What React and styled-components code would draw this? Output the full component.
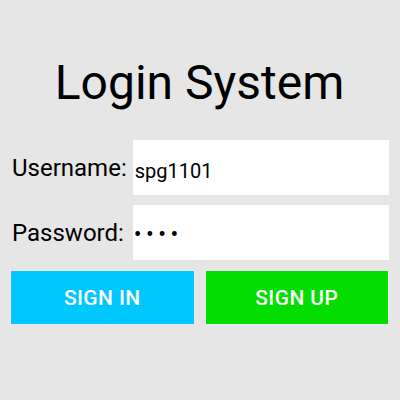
import React from "react";
import styled, { createGlobalStyle } from "styled-components";

const Global = createGlobalStyle`
  html, body {
    margin: 0;
    padding: 0;
    background: #e6e6e6;
  }
  body {
    font-family: Roboto, "Noto Sans", "Liberation Sans", sans-serif;
    color: #000;
  }
`;

const Page = styled.div`
  width: 400px;
  height: 400px;
  box-sizing: border-box;
  padding: 59px 11px 0 10px;
  display: flex;
  flex-direction: column;
  background: #e6e6e6;
`;

const Title = styled.h1`
  margin: 0 0 33px 0;
  font-family: Roboto, sans-serif;
  font-weight: 400;
  font-size: 48px;
  line-height: 48px;
  text-align: center;
  color: #000;
`;

const Form = styled.div`
  display: grid;
  grid-template-columns: auto 1fr;
  column-gap: 6px;
  row-gap: 10px;
  padding-left: 2px;
`;

const Label = styled.label`
  display: flex;
  align-items: center;
  font-family: Roboto, sans-serif;
  font-size: 24px;
  line-height: 28px;
  color: #000;
`;

const Field = styled.input`
  box-sizing: border-box;
  height: 55px;
  width: 100%;
  border: none;
  outline: none;
  background: #fff;
  margin: 0;
  padding: ${(p) => (p.type === "password" ? "4px 0 0 1px" : "6px 0 0 2px")};
  font-family: Roboto, sans-serif;
  font-size: ${(p) => (p.type === "password" ? "23px" : "20px")};
  color: #000;
  letter-spacing: ${(p) => (p.type === "password" ? "4.5px" : "0")};
`;

const Buttons = styled.div`
  display: grid;
  grid-template-columns: 1fr 1fr;
  column-gap: 10px;
  margin-top: 10px;
`;

const Button = styled.button`
  box-sizing: border-box;
  height: 55px;
  border: 1px solid #f0e8f0;
  border-radius: 0;
  background: ${(p) => p.$bg};
  color: #fff;
  font-family: Roboto, sans-serif;
  font-weight: 500;
  font-size: 21px;
  letter-spacing: 0.4px;
  padding: 0;
  cursor: pointer;
`;

export default function App() {
  return (
    <>
      <Global />
      <Page>
        <Title>Login System</Title>
        <Form>
          <Label htmlFor="u">Username:</Label>
          <Field id="u" type="text" defaultValue="spg1101" />
          <Label htmlFor="p">Password:</Label>
          <Field id="p" type="password" defaultValue="1234" />
        </Form>
        <Buttons>
          <Button $bg="#00c8ff">SIGN IN</Button>
          <Button $bg="#03dd00">SIGN UP</Button>
        </Buttons>
      </Page>
    </>
  );
}
